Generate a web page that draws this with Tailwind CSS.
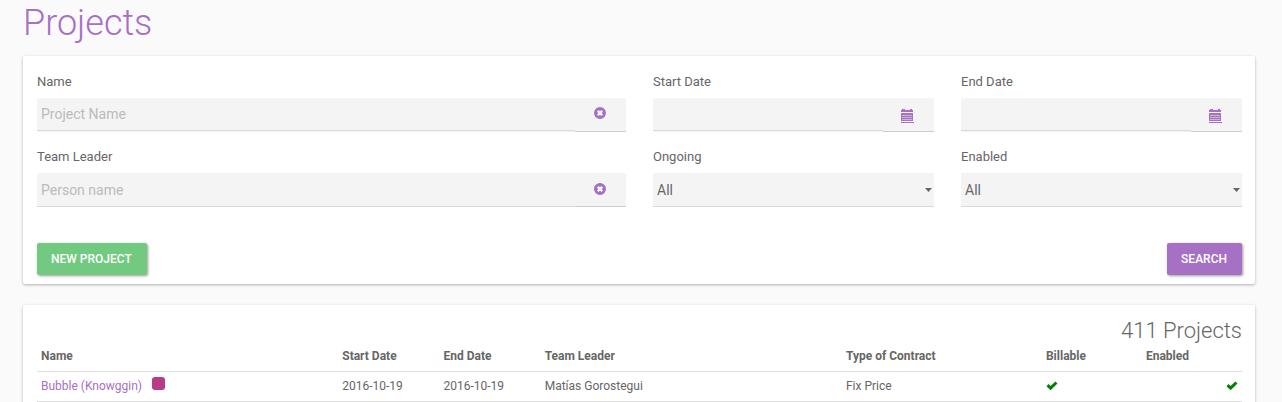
<!DOCTYPE html>
<html lang="en">
<head>
  <meta charset="UTF-8" />
  <meta name="viewport" content="width=device-width, initial-scale=1.0"/>
  <title>Projects</title>
  <script src="https://cdn.jsdelivr.net/npm/@tailwindcss/browser@4"></script>
</head>
<body class="bg-[#fafafa] text-[#666] font-['Roboto',sans-serif] pl-[23px] pr-[27px] overflow-hidden">
  <!-- icons -->
  <svg class="hidden">
    <symbol id="remove" viewBox="0 0 12 12">
      <path fill-rule="evenodd" d="M6 0a6 6 0 1 0 0 12A6 6 0 0 0 6 0ZM4.6 3 6 4.2 7.4 3 9 4.6 7.8 6 9 7.4 7.4 9 6 7.8 4.6 9 3 7.4 4.2 6 3 4.6Z"/>
    </symbol>
    <symbol id="calendar" viewBox="0 0 13 14">
      <path d="M1 0h3v1h5V0h2v1h1v2H0V1h1ZM0 4h12v8H0ZM0 13h13v1H0Z"/>
      <path d="M1 6.5h10M1 8.5h10M1 10.5h10" stroke="#f4f4f4" stroke-opacity=".5"/>
    </symbol>
    <symbol id="check" viewBox="0 0 12 10">
      <path d="M.5 5.2 2.6 3.1 4.6 5 9.4.5l2.1 2L4.6 9.3Z"/>
    </symbol>
  </svg>

  <h1 class="text-[36px] leading-[46px] font-light text-[#a670c5] mb-[10px]">Projects</h1>

  <form class="bg-white rounded-xs shadow-[0_1px_3px_rgba(0,0,0,0.3)] pl-[14px] pr-[13px] pt-4 pb-[9px] mb-[21px]">
    <div class="grid grid-cols-4 gap-x-[27px] gap-y-[15px]">
      <div class="col-span-2">
        <label for="name" class="block text-[13px] leading-5 mb-[6px]">Name</label>
        <div class="flex items-start bg-[#f4f4f4] rounded-xs">
          <input id="name" type="text" placeholder="Project Name" class="flex-1 min-w-0 h-[33px] px-1 text-sm border-b border-[#d9d9d9] placeholder:text-[#bbb] outline-none">
          <button type="button" aria-label="Clear name" class="w-[51px] h-[34px] pb-1 pr-[2px] flex items-center justify-center border-b border-[#ccc] text-[#a670c5]">
            <svg class="size-3 fill-current"><use href="#remove"/></svg>
          </button>
        </div>
      </div>
      <div>
        <label for="start" class="block text-[13px] leading-5 mb-[6px]">Start Date</label>
        <div class="flex items-start bg-[#f4f4f4] rounded-xs">
          <input id="start" type="text" class="flex-1 min-w-0 h-[33px] px-1 text-sm border-b border-[#d9d9d9] outline-none">
          <button type="button" aria-label="Pick start date" class="w-[51px] h-[34px] pt-[3px] pr-[2px] flex items-center justify-center border-b border-[#ccc] text-[#a670c5]">
            <svg class="w-[13px] h-[14px] fill-current"><use href="#calendar"/></svg>
          </button>
        </div>
      </div>
      <div>
        <label for="end" class="block text-[13px] leading-5 mb-[6px]">End Date</label>
        <div class="flex items-start bg-[#f4f4f4] rounded-xs">
          <input id="end" type="text" class="flex-1 min-w-0 h-[33px] px-1 text-sm border-b border-[#d9d9d9] outline-none">
          <button type="button" aria-label="Pick end date" class="w-[51px] h-[34px] pt-[3px] pr-[2px] flex items-center justify-center border-b border-[#ccc] text-[#a670c5]">
            <svg class="w-[13px] h-[14px] fill-current"><use href="#calendar"/></svg>
          </button>
        </div>
      </div>
      <div class="col-span-2">
        <label for="leader" class="block text-[13px] leading-5 mb-[6px]">Team Leader</label>
        <div class="flex items-start bg-[#f4f4f4] rounded-xs">
          <input id="leader" type="text" placeholder="Person name" class="flex-1 min-w-0 h-[34px] px-1 text-sm border-b border-[#d9d9d9] placeholder:text-[#bbb] outline-none">
          <button type="button" aria-label="Clear team leader" class="w-[51px] h-[34px] pb-px pr-[2px] flex items-center justify-center border-b border-[#ccc] text-[#a670c5]">
            <svg class="size-3 fill-current"><use href="#remove"/></svg>
          </button>
        </div>
      </div>
      <div>
        <label for="ongoing" class="block text-[13px] leading-5 mb-[6px]">Ongoing</label>
        <div class="relative">
          <select id="ongoing" class="block appearance-none w-full h-[34px] px-1 text-sm bg-[#f4f4f4] border-b border-[#d9d9d9] outline-none">
            <option>All</option>
            <option>Yes</option>
            <option>No</option>
          </select>
          <svg class="absolute right-[2px] top-[15px] w-[7px] h-1 fill-[#666] pointer-events-none" viewBox="0 0 7 4"><path d="M0 0h7L3.5 4Z"/></svg>
        </div>
      </div>
      <div>
        <label for="enabled" class="block text-[13px] leading-5 mb-[6px]">Enabled</label>
        <div class="relative">
          <select id="enabled" class="block appearance-none w-full h-[34px] px-1 text-sm bg-[#f4f4f4] border-b border-[#d9d9d9] outline-none">
            <option>All</option>
            <option>Yes</option>
            <option>No</option>
          </select>
          <svg class="absolute right-[2px] top-[15px] w-[7px] h-1 fill-[#666] pointer-events-none" viewBox="0 0 7 4"><path d="M0 0h7L3.5 4Z"/></svg>
        </div>
      </div>
    </div>
    <div class="flex justify-between mt-9">
      <button type="button" class="h-8 pl-[14px] pr-[15px] rounded-xs bg-[#72c980] text-white text-xs font-medium uppercase shadow-[1px_1px_3px_rgba(0,0,0,0.4)]">New Project</button>
      <button type="submit" class="h-8 pl-[14px] pr-[15px] rounded-xs bg-[#a670c5] text-white text-xs font-medium uppercase shadow-[1px_1px_3px_rgba(0,0,0,0.4)]">Search</button>
    </div>
  </form>

  <section class="bg-white rounded-xs shadow-[0_1px_3px_rgba(0,0,0,0.3)] pl-[14px] pr-[13px] pt-3 pb-4">
    <h2 class="text-[22px] leading-7 font-light text-right">411 Projects</h2>
    <table class="w-full table-fixed text-left text-xs">
      <thead>
        <tr class="h-[26px] border-b border-[#ddd]">
          <th class="w-[25%] px-1 pb-1 font-bold">Name</th>
          <th class="w-[8.4%] px-1 pb-1 font-bold">Start Date</th>
          <th class="w-[8.4%] px-1 pb-1 font-bold">End Date</th>
          <th class="w-[25%] px-1 pb-1 font-bold">Team Leader</th>
          <th class="w-[16.6%] px-1 pb-1 font-bold">Type of Contract</th>
          <th class="w-[8.3%] px-1 pb-1 font-bold">Billable</th>
          <th class="w-[8.3%] px-1 pb-1 font-bold">Enabled</th>
        </tr>
      </thead>
      <tbody>
        <tr class="h-[30px] border-b border-[#ddd]">
          <td class="px-1">
            <div class="flex items-center">
              <a href="#" class="text-[#a670c5]">Bubble (Knowggin)</a>
              <span class="size-[13px] rounded-[3px] bg-[#b83b87] ml-[10px] mb-[6px]"></span>
            </div>
          </td>
          <td class="px-1">2016-10-19</td>
          <td class="px-1">2016-10-19</td>
          <td class="px-1">Matías Gorostegui</td>
          <td class="px-1">Fix Price</td>
          <td class="px-1"><svg role="img" aria-label="Yes" class="w-3 h-[10px] fill-[#008000]"><use href="#check"/></svg></td>
          <td class="px-1"><svg role="img" aria-label="Yes" class="w-3 h-[10px] fill-[#008000] ml-auto"><use href="#check"/></svg></td>
        </tr>
      </tbody>
    </table>
  </section>
</body>
</html>
